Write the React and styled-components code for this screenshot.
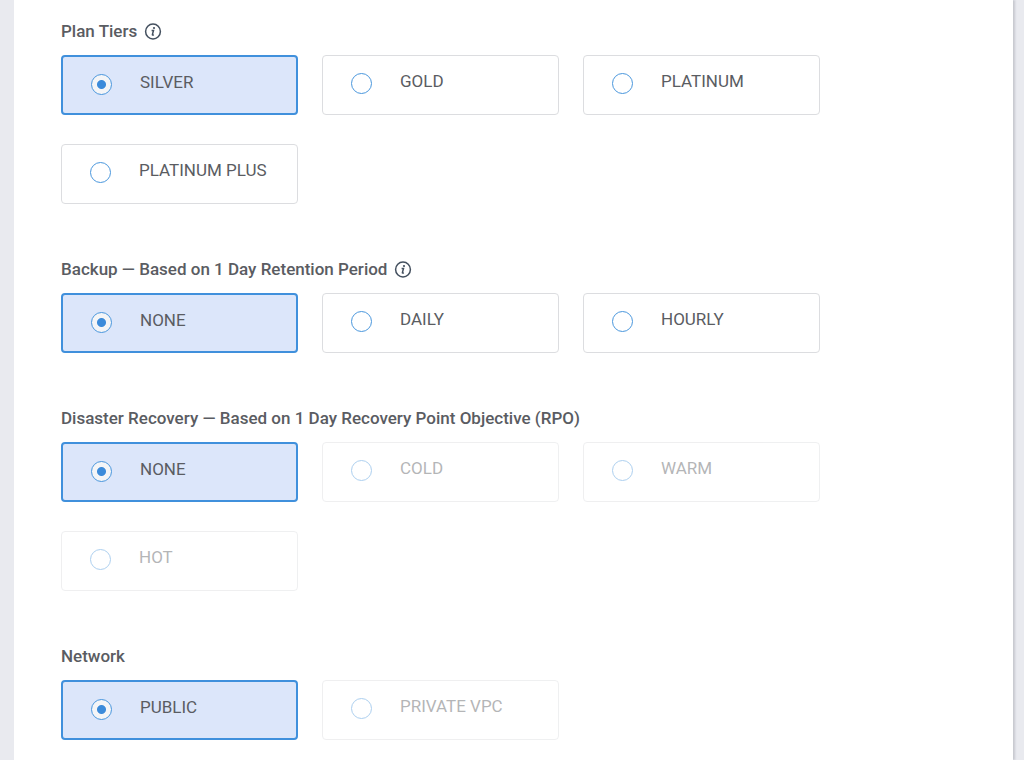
import React from "react";
import styled, { createGlobalStyle } from "styled-components";

const GlobalStyle = createGlobalStyle`
  * { box-sizing: border-box; }
  body { margin: 0; background: #e9eaef; font-family: Roboto, "Liberation Sans", sans-serif; color: #5a5c62; }
`;

const Panel = styled.main`
  margin: 0 11px 0 14px;
  min-height: 100vh;
  padding: 20px 193px 20px 47px;
  background: #fff;
  box-shadow: 2px 0 2px rgba(60, 64, 80, 0.2);
`;

const Group = styled.fieldset`
  margin: 0 0 54px;
  padding: 0;
  border: 0;
  min-width: 0;
  &:last-child { margin-bottom: 0; }
`;

const Legend = styled.legend`
  display: flex;
  align-items: center;
  gap: 7px;
  height: 22px;
  margin-bottom: 13px;
  padding: 0;
  font-size: 17px;
  line-height: 22px;
  font-weight: 500;
  white-space: nowrap;
`;

const Options = styled.div`
  display: grid;
  grid-template-columns: repeat(auto-fill, minmax(220px, 1fr));
  gap: 29px 24px;
`;

const Card = styled.label`
  display: flex;
  gap: 28px;
  height: 60px;
  padding: 17px 28px;
  border: 1px solid #dcdde0;
  border-radius: 4px;
  font-size: 17px;
  line-height: 16px;
  white-space: nowrap;
  opacity: ${(p) => (p.$disabled ? 0.45 : 1)};
  &:has(input:checked) {
    border: 2px solid #4090dc;
    background: #dce6fa;
  }
`;

const Radio = styled.input`
  appearance: none;
  flex: none;
  width: 21px;
  height: 21px;
  margin: 0;
  border: 1px solid #4a97dd;
  border-radius: 50%;
  background: #fff;
  &:checked { background: radial-gradient(circle, #3c8bda 4px, #f4f5f7 5px); }
`;

const Info = () => (
  <svg width="18" height="18" viewBox="0 0 18 18" fill="none" role="img" aria-label="Information">
    <circle cx="9" cy="9.5" r="7.4" stroke="#44505f" strokeWidth="1.5" />
    <circle cx="10" cy="6" r="1.1" fill="#44505f" />
    <path d="M7.6 8.5h1.9L8.4 12.6q-.1.9 1.4.2" stroke="#44505f" strokeWidth="1.5" />
  </svg>
);

const groups = [
  { id: "tier", title: "Plan Tiers", info: true, options: ["SILVER", "GOLD", "PLATINUM", "PLATINUM PLUS"] },
  { id: "backup", title: "Backup — Based on 1 Day Retention Period", info: true, options: ["NONE", "DAILY", "HOURLY"] },
  { id: "recovery", title: "Disaster Recovery — Based on 1 Day Recovery Point Objective (RPO)", locked: true, options: ["NONE", "COLD", "WARM", "HOT"] },
  { id: "network", title: "Network", locked: true, options: ["PUBLIC", "PRIVATE VPC"] },
];

export default function App() {
  return (
    <>
      <GlobalStyle />
      <Panel>
        {groups.map((g) => (
          <Group key={g.id}>
            <Legend>{g.title}{g.info && <Info />}</Legend>
            <Options>
              {g.options.map((o, i) => (
                <Card key={o} $disabled={g.locked && i > 0}>
                  <Radio type="radio" name={g.id} value={o} defaultChecked={i === 0} disabled={g.locked && i > 0} />
                  {o}
                </Card>
              ))}
            </Options>
          </Group>
        ))}
      </Panel>
    </>
  );
}
